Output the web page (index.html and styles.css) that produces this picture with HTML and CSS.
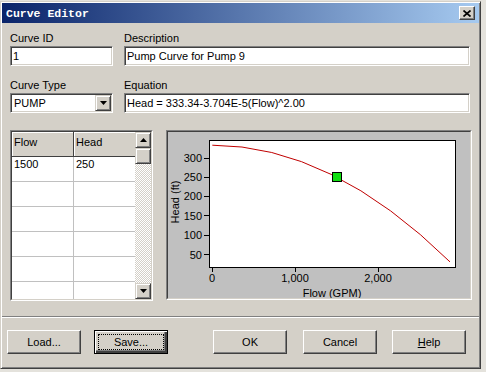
FILE: index.html
```html
<!DOCTYPE html>
<html>
<head>
    <title>Curve Editor</title>
    <link rel="stylesheet" href="styles.css">
</head>
<body>
    <div class="window">
        <div class="titlebar">
            <span class="title">Curve Editor</span>
            <span class="close-btn">
                <svg width="8" height="7" viewBox="0 0 8 7"><path d="M0.5 0.5L7.5 6.5M7.5 0.5L0.5 6.5" stroke="#000" stroke-width="1.7"/></svg>
            </span>
        </div>

        <div class="content">
            <div class="fields">
                <label>Curve ID</label>
                <label>Description</label>
                <div class="field">1</div>
                <div class="field">Pump Curve for Pump 9</div>

                <label class="second">Curve Type</label>
                <label class="second">Equation</label>
                <div class="field combo">
                    <span class="combo-text">PUMP</span>
                    <span class="drop-btn"><svg width="7" height="4" viewBox="0 0 7 4"><path d="M0 0h7L3.5 4z"/></svg></span>
                </div>
                <div class="field">Head = 333.34-3.704E-5(Flow)^2.00</div>
            </div>

            <div class="main">
                <div class="grid-box">
                    <div class="grid">
                        <div class="cols">
                            <div class="row header">
                                <div class="cell">Flow</div>
                                <div class="cell">Head</div>
                            </div>
                            <div class="row">
                                <div class="cell">1500</div>
                                <div class="cell">250</div>
                            </div>
                            <div class="row"><div class="cell"></div><div class="cell"></div></div>
                            <div class="row"><div class="cell"></div><div class="cell"></div></div>
                            <div class="row"><div class="cell"></div><div class="cell"></div></div>
                            <div class="row"><div class="cell"></div><div class="cell"></div></div>
                            <div class="row"><div class="cell"></div><div class="cell"></div></div>
                        </div>
                        <div class="scrollbar">
                            <div class="sb-btn"><svg width="7" height="4" viewBox="0 0 7 4"><path d="M3.5 0L7 4H0z"/></svg></div>
                            <div class="sb-btn thumb"></div>
                            <div class="sb-track"></div>
                            <div class="sb-btn"><svg width="7" height="4" viewBox="0 0 7 4"><path d="M0 0h7L3.5 4z"/></svg></div>
                        </div>
                    </div>
                </div>

                <div class="chart-box">
                    <div class="chart">
                        <svg width="302" height="166" viewBox="168 132 302 166">
                            <rect x="209.5" y="140.5" width="246" height="127" fill="#fff" stroke="#000"/>
                            <!-- y axis ticks -->
                            <path d="M204 158.5h5M204 177.5h5M204 196.5h5M204 215.5h5M204 235.5h5M204 254.5h5" stroke="#000"/>
                            <!-- x axis ticks -->
                            <path d="M212.5 268v4M295.5 268v4M378.5 268v4" stroke="#000"/>
                            <g class="axis-text" text-anchor="end">
                                <text x="202" y="162">300</text>
                                <text x="202" y="181">250</text>
                                <text x="202" y="200">200</text>
                                <text x="202" y="220">150</text>
                                <text x="202" y="239">100</text>
                                <text x="202" y="259">50</text>
                            </g>
                            <g class="axis-text" text-anchor="middle">
                                <text x="212" y="282">0</text>
                                <text x="295" y="282">1,000</text>
                                <text x="378" y="282">2,000</text>
                                <text x="332" y="297">Flow (GPM)</text>
                                <text transform="translate(179,202) rotate(-90)">Head (ft)</text>
                            </g>
                            <path d="M212.3 145.2Q331.15 145.2 450 261.9" fill="none" stroke="#c00000"/>
                            <rect x="332.5" y="172.5" width="9" height="9" fill="#11dd11" stroke="#000"/>
                        </svg>
                    </div>
                </div>
            </div>

            <div class="separator"></div>

            <div class="buttons">
                <button class="btn">Load...</button>
                <button class="btn default"><span class="focus">Save...</span></button>
                <button class="btn">OK</button>
                <button class="btn">Cancel</button>
                <button class="btn"><u>H</u>elp</button>
            </div>
        </div>
    </div>
</body>
</html>
```

FILE: styles.css
```css
* {
    box-sizing: border-box;
}

body {
    margin: 0;
    padding-top: 1px;
    background-color: #e4e2dc;
    font-family: "Liberation Sans", Arial, sans-serif;
    font-size: 11px;
    color: #000;
}

.window {
    width: 481px;
    height: 368px;
    padding: 1px;
    background: #d4d0c8;
    border: 1px solid;
    border-color: #d4d0c8 #404040 #404040 #d4d0c8;
    box-shadow: inset 1px 1px #fff, inset -1px -1px #808080;
}

.titlebar {
    height: 20px;
    display: flex;
    align-items: center;
    justify-content: space-between;
    padding: 0 4px 0 4px;
    background: linear-gradient(to right, #0a246a, #a6caf0);
}

.title {
    color: #fff;
    font-family: "Liberation Mono", monospace;
    font-weight: bold;
    font-size: 11.5px;
}

.close-btn {
    width: 16px;
    height: 14px;
    display: flex;
    align-items: center;
    justify-content: center;
    background: #d4d0c8;
    border: 1px solid;
    border-color: #fff #404040 #404040 #fff;
    box-shadow: inset -1px -1px #808080;
}

.content {
    padding: 8px 0 0 8px;
}

.fields {
    display: grid;
    grid-template-columns: 103px 346px;
    column-gap: 11px;
}

label {
    display: block;
    height: 15px;
    line-height: 14px;
}

label.second {
    margin-top: 12px;
}

.field {
    height: 20px;
    padding: 0 2px;
    line-height: 18px;
    white-space: nowrap;
    overflow: hidden;
    background: #fff;
    border: 1px solid;
    border-color: #808080 #fff #fff #808080;
    box-shadow: inset 1px 1px #404040, inset -1px -1px #d4d0c8;
}

.combo {
    display: flex;
    padding: 1px;
}

.combo-text {
    flex: 1;
    padding-left: 2px;
    line-height: 16px;
}

.drop-btn,
.sb-btn {
    width: 16px;
    height: 16px;
    display: flex;
    align-items: center;
    justify-content: center;
    background: #d4d0c8;
    border: 1px solid;
    border-color: #d4d0c8 #404040 #404040 #d4d0c8;
    box-shadow: inset 1px 1px #fff, inset -1px -1px #808080;
}

.main {
    display: flex;
    margin-top: 17px;
}

.grid-box {
    width: 143px;
    height: 171px;
    border: 1px solid;
    border-color: #808080 #fff #fff #808080;
}

.grid {
    height: 100%;
    display: flex;
    background: #fff;
    border: 1px solid;
    border-color: #404040 #d4d0c8 #d4d0c8 #404040;
}

.cols {
    flex: 1;
    overflow: hidden;
}

.row {
    display: grid;
    grid-template-columns: 62px 1fr;
    height: 25px;
    border-bottom: 1px solid #c0c0c0;
}

.cell {
    padding-left: 2px;
    line-height: 14px;
    border-right: 1px solid #c0c0c0;
}

.cell:last-child {
    border-right: none;
}

.row.header {
    border-bottom: 1px solid #404040;
    background: #d4d0c8;
}

.row.header .cell {
    padding-top: 3px;
    border-right: 1px solid #404040;
    box-shadow: inset 1px 1px #fff;
}

.row.header .cell:last-child {
    border-right: none;
}

.scrollbar {
    width: 16px;
    display: flex;
    flex-direction: column;
}

.sb-track {
    flex: 1;
    background: repeating-conic-gradient(#fff 0 25%, #d4d0c8 0 50%) 0 0 / 2px 2px;
}

.chart-box {
    width: 306px;
    height: 170px;
    margin-left: 13px;
    border: 1px solid;
    border-color: #808080 #fff #fff #808080;
}

.chart {
    height: 100%;
    background: #c0c0c0;
    border: 1px solid;
    border-color: #404040 #d4d0c8 #d4d0c8 #404040;
}

.chart svg {
    display: block;
}

.axis-text {
    font-family: "Liberation Sans", Arial, sans-serif;
    font-size: 11px;
    fill: #000;
}

.separator {
    height: 2px;
    margin: 15px 0 0 -8px;
    width: 477px;
    border-top: 1px solid #808080;
    border-bottom: 1px solid #fff;
}

.buttons {
    display: flex;
    margin: 12px 0 0 -3px;
}

.btn {
    width: 75px;
    height: 24px;
    padding: 0;
    margin-right: 13px;
    font-family: "Liberation Sans", Arial, sans-serif;
    font-size: 11px;
    color: #000;
    background: #d4d0c8;
    border: 1px solid;
    border-color: #fff #404040 #404040 #fff;
    box-shadow: inset -1px -1px #808080;
}

.btn.default {
    margin-right: 45px;
    padding: 3px;
    border-color: #000;
    box-shadow: inset 1px 1px #fff, inset -2px -2px #404040, inset -3px -3px #808080;
}

.btn:nth-child(3) {
    margin-right: 16px;
}

.btn:nth-child(4) {
    margin-right: 15px;
}

.focus {
    display: block;
    height: 100%;
    line-height: 14px;
    border: 1px dotted #000;
}
```
